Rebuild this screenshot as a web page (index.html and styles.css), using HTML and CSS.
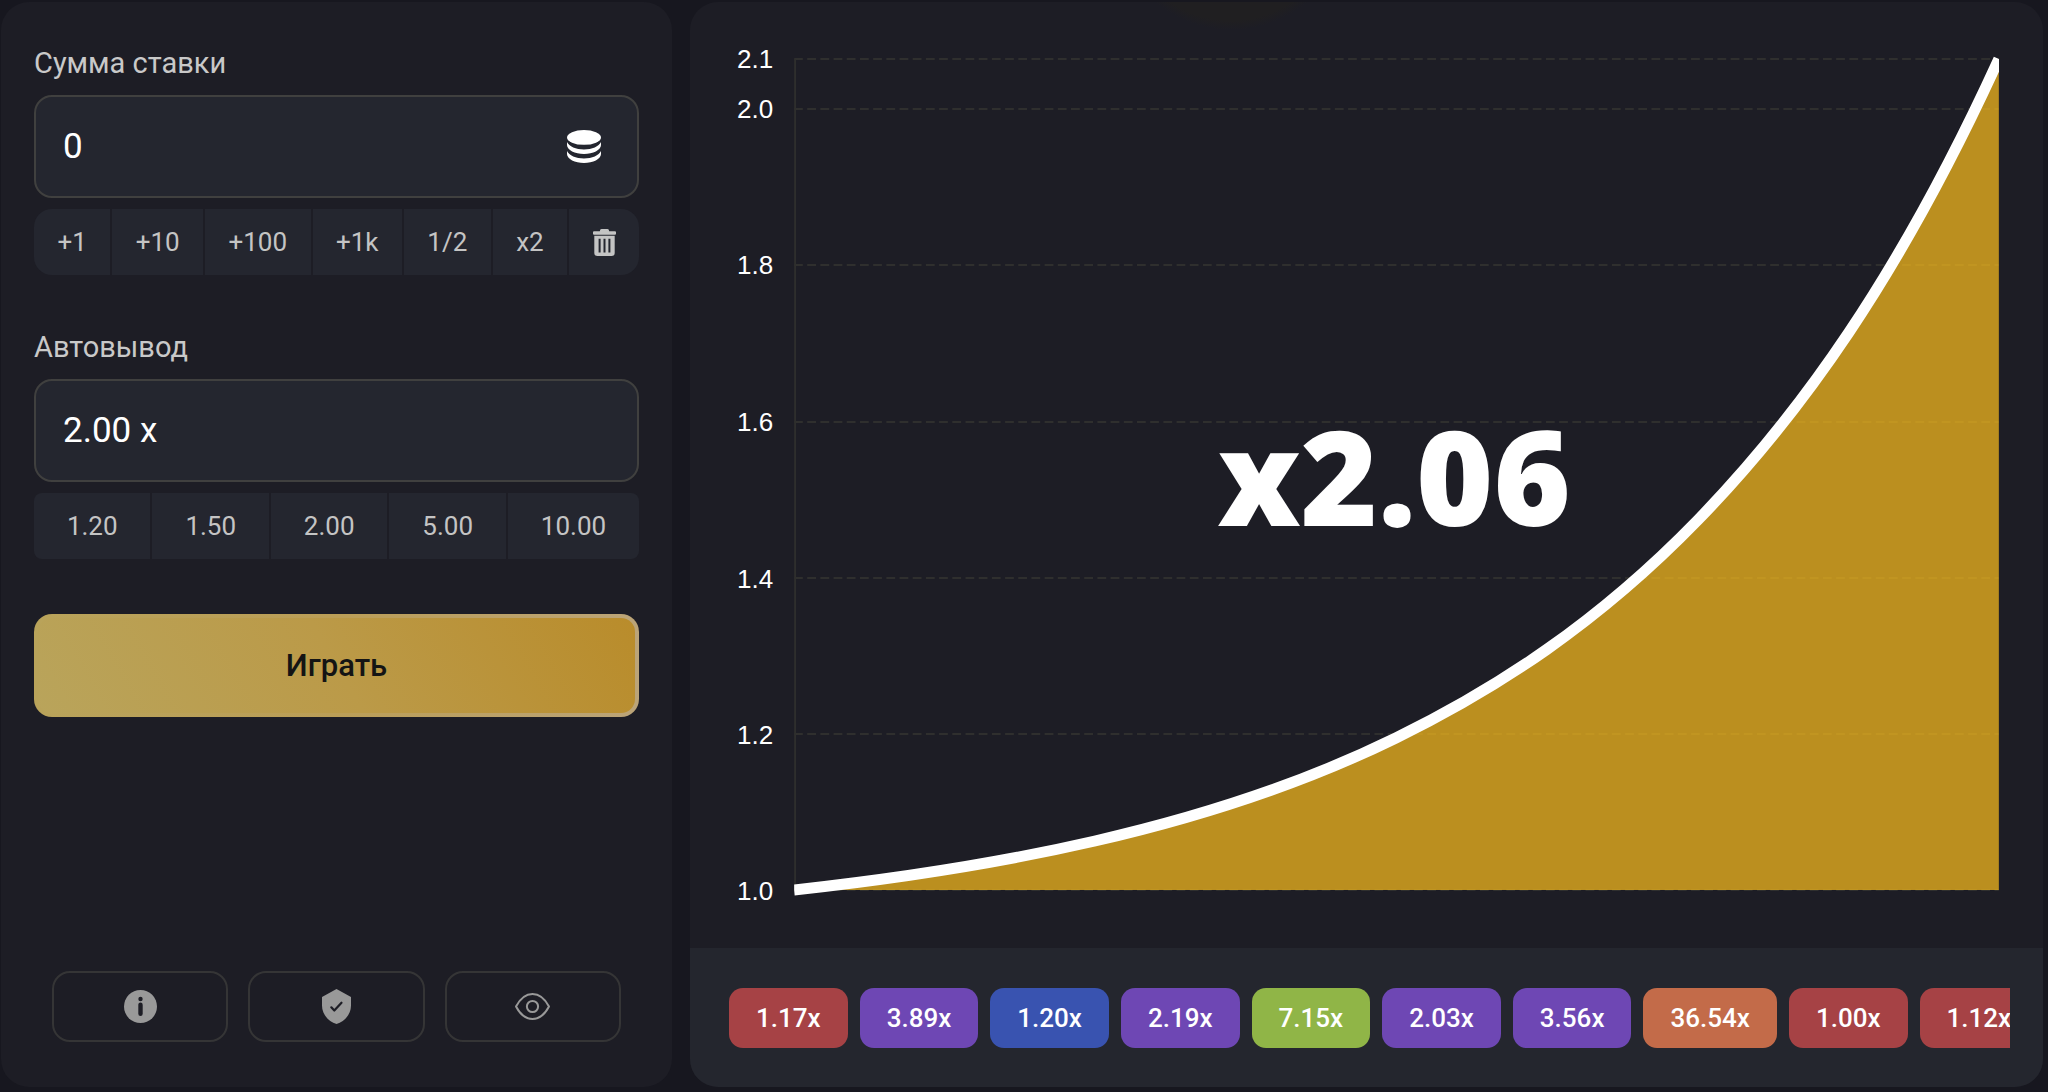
FILE: index.html
```html
<!DOCTYPE html>
<html lang="ru">
<head>
<meta charset="utf-8">
<meta name="viewport" content="width=device-width, initial-scale=1">
<title>Crash</title>
<link rel="stylesheet" href="styles.css">
</head>
<body>
<main class="game">
  <form class="panel controls">
    <div class="group">
      <label class="label" for="bet">Сумма ставки</label>
      <div class="field">
        <input class="field-input" id="bet" type="text" value="0">
        <svg class="icon-coins" viewBox="0 0 34 33" width="34" height="33" fill="#fff" aria-hidden="true">
          <ellipse cx="17" cy="7.4" rx="17" ry="7.4"/>
          <path d="M0 12v3c0 5 8 9 17 9s17-4 17-9v-3c-2 4.500-9 7.500-17 7.500S2 16.500 0 12z"/>
          <path d="M0 21v3c0 5 8 9 17 9s17-4 17-9v-3c-2 4.500-9 7.500-17 7.500S2 25.500 0 21z"/>
        </svg>
      </div>
      <div class="segments segments-round">
        <button class="segment" type="button">+1</button>
        <button class="segment" type="button">+10</button>
        <button class="segment" type="button">+100</button>
        <button class="segment" type="button">+1k</button>
        <button class="segment" type="button">1/2</button>
        <button class="segment" type="button">x2</button>
        <button class="segment" type="button" aria-label="Очистить">
          <svg viewBox="0 0 23 27" width="23" height="27" aria-hidden="true">
            <path fill="currentColor" fill-rule="evenodd" d="M8.500 0h6q1.500 0 1.700 2.200H22q1 0 1 1v1.600q0 .9-1 .9H1q-1 0-1-.9V3.200q0-1 1-1h5.800Q7 0 8.500 0zM1.300 6.800h20.400V24q0 3-3 3H4.300q-3 0-3-3zM5.600 9.800v13.800h2V9.800zm4.900 0v13.800h2V9.800zm4.900 0v13.800h2V9.800z"/>
          </svg>
        </button>
      </div>
    </div>

    <div class="group">
      <label class="label" for="auto">Автовывод</label>
      <div class="field">
        <input class="field-input" id="auto" type="text" value="2.00 x">
      </div>
      <div class="segments">
        <button class="segment" type="button">1.20</button>
        <button class="segment" type="button">1.50</button>
        <button class="segment" type="button">2.00</button>
        <button class="segment" type="button">5.00</button>
        <button class="segment" type="button">10.00</button>
      </div>
    </div>

    <button class="play" type="button">Играть</button>

    <div class="tools">
      <button class="tool" type="button" aria-label="Информация">
        <svg viewBox="0 0 33 33" width="33" height="33" aria-hidden="true">
          <circle cx="16.500" cy="16.500" r="16.500" fill="#999"/>
          <circle cx="16.500" cy="9" r="2.200" fill="#1d1d25"/>
          <path d="M16.500 14.800v9" stroke="#1d1d25" stroke-width="4.400" stroke-linecap="round"/>
        </svg>
      </button>
      <button class="tool" type="button" aria-label="Честная игра">
        <svg viewBox="0 0 29 35" width="29" height="35" fill="none" aria-hidden="true">
          <path d="M14.500 0 29 8v8.500C29 25 22.500 33 14.500 35 6.500 33 0 25 0 16.500V8z" fill="#999"/>
          <path d="m9.300 18.300 3 3.200 7.200-7.800" stroke="#1d1d25" stroke-width="2.200" stroke-linecap="round" stroke-linejoin="round"/>
        </svg>
      </button>
      <button class="tool" type="button" aria-label="Показать">
        <svg viewBox="0 0 35 27" width="35" height="27" fill="none" stroke="#999" stroke-width="2" stroke-linejoin="round" aria-hidden="true">
          <path d="M1 13.500C5 6 11 1 17.500 1S30 6 34 13.500C30 21 24 26 17.500 26S5 21 1 13.500z"/>
          <circle cx="17.500" cy="13.500" r="5.600"/>
        </svg>
      </button>
    </div>
  </form>

  <section class="panel board">
    <div class="chart">
      <ol class="axis">
        <li>2.1</li>
        <li>2.0</li>
        <li>1.8</li>
        <li>1.6</li>
        <li>1.4</li>
        <li>1.2</li>
        <li>1.0</li>
      </ol>
      <div class="plot">
        <svg class="plot-svg" viewBox="0 0 1205 832" preserveAspectRatio="none" aria-hidden="true">
          <g class="grid-lines">
            <path pathLength="548" d="M0 0H1205"/>
            <path pathLength="548" d="M0 50H1205"/>
            <path pathLength="548" d="M0 206H1205"/>
            <path pathLength="548" d="M0 363H1205"/>
            <path pathLength="548" d="M0 519H1205"/>
            <path pathLength="548" d="M0 675H1205"/>
            <path pathLength="548" d="M0 831H1205"/>
          </g>
          <path class="axis-line" d="M1 0V831"/>
          <path class="area" d="M0 831C100 820 201 805 301 782S502 728 602 679S803 565 904 461S1105 219 1205 0V831z"/>
          <path class="curve" d="M0 831C100 820 201 805 301 782S502 728 602 679S803 565 904 461S1105 219 1205 0"/>
        </svg>
        <output class="multiplier">x2.06</output>
      </div>
    </div>
    <div class="history">
      <ul class="history-list">
        <li class="chip red">1.17x</li>
        <li class="chip violet">3.89x</li>
        <li class="chip blue">1.20x</li>
        <li class="chip violet">2.19x</li>
        <li class="chip green">7.15x</li>
        <li class="chip violet">2.03x</li>
        <li class="chip violet">3.56x</li>
        <li class="chip orange">36.54x</li>
        <li class="chip red">1.00x</li>
        <li class="chip red">1.12x</li>
      </ul>
    </div>
  </section>
</main>
</body>
</html>
```
FILE: styles.css
```css
* {
  box-sizing: border-box;
}

body {
  margin: 0;
  background: #17171f;
  color: #fff;
  font-family: Roboto, "Liberation Sans", sans-serif;
}

button,
input {
  margin: 0;
  border: 0;
  font: inherit;
}

button {
  cursor: pointer;
}

ol,
ul {
  margin: 0;
  padding: 0;
  list-style: none;
}

svg {
  display: block;
  flex: none;
}

.game {
  display: grid;
  grid-template-columns: minmax(0, 671fr) minmax(0, 1353fr);
  gap: 18px;
  min-height: 100vh;
  padding: 2px 5px 5px 1px;
}

.panel {
  display: flex;
  flex-direction: column;
  border-radius: 28px;
  background-color: #1d1d25;
  overflow: hidden;
}

/* Bet controls */
.controls {
  gap: 55px;
  padding: 44px 33px 45px;
}

.group {
  display: flex;
  flex-direction: column;
}

.label {
  margin-bottom: 15px;
  color: #c9c9c9;
  font-size: 29px;
  line-height: 34px;
}

.field {
  display: flex;
  align-items: center;
  height: 103px;
  margin-bottom: 11px;
  padding: 0 36px 0 27px;
  border: 2px solid #40403f;
  border-radius: 18px;
  background: #24262f;
}

.field-input {
  flex: 1;
  min-width: 0;
  height: 100%;
  padding: 0;
  background: transparent;
  color: #fff;
  font-size: 35px;
  outline: 0;
}

.segments {
  display: flex;
  gap: 2px;
  height: 66px;
  border-radius: 8px;
  overflow: hidden;
}

.segments-round {
  border-radius: 18px;
}

.segment {
  display: flex;
  flex: 1 1 auto;
  align-items: center;
  justify-content: center;
  padding: 0 22px;
  background: #24262f;
  color: #c4c4c4;
  font-size: 26px;
}

.play {
  height: 103px;
  border: 4px solid transparent;
  border-radius: 18px;
  background:
    linear-gradient(60deg, #b9a45b, #bb9a48 50%, #b98c2b) padding-box,
    linear-gradient(90deg, #b9a35a, #bb9e57 50%, #bba478) border-box;
  color: #141414;
  font-size: 31px;
  font-weight: 500;
}

.tools {
  display: flex;
  gap: 20px;
  margin: auto 18px 0;
}

.tool {
  display: flex;
  flex: 1;
  align-items: center;
  justify-content: center;
  height: 71px;
  border: 2px solid #353536;
  border-radius: 18px;
  background: transparent;
}

/* Chart */
.board {
  background-image: radial-gradient(circle 118px at 40% -90px, #201f21 92%, transparent);
}

.chart {
  display: flex;
  flex: 1;
  gap: 21px;
  padding: 57px 44px 57px 47px;
}

.axis {
  display: grid;
  grid-template-rows: 50fr 156fr 157fr 156fr 156fr 156fr 0;
  font-family: "Liberation Sans", Arial, sans-serif;
  font-size: 26px;
  line-height: 0;
  text-align: right;
}

.axis li {
  height: 0;
}

.plot {
  display: grid;
  flex: 1;
  place-items: center;
  min-width: 0;
  clip-path: inset(-10px 0);
}

.plot-svg,
.multiplier {
  grid-area: 1 / 1;
}

.plot-svg {
  width: 100%;
  height: 100%;
  overflow: visible;
}

.grid-lines {
  fill: none;
  stroke: #2f2f2e;
  stroke-width: 2;
  stroke-dasharray: 4 2;
}

.axis-line {
  stroke: #2f2f2e;
  stroke-width: 2;
}

.area {
  fill: rgba(255, 193, 28, 0.7);
}

.curve {
  fill: none;
  stroke: #fff;
  stroke-width: 11;
  vector-effect: non-scaling-stroke;
}

.multiplier {
  padding-right: 5px;
  font-family: "Open Sans", sans-serif;
  font-size: 132px;
  font-weight: 800;
  line-height: 1;
}

/* Round history */
.history {
  padding: 40px 33px 39px 39px;
  background: #24262e;
}

.history-list {
  display: flex;
  gap: 12px;
  overflow: hidden;
}

.chip {
  flex: none;
  padding: 0 27px;
  border-radius: 14px;
  font-size: 26px;
  font-weight: 500;
  line-height: 60px;
}

.red {
  background: #a64245;
}

.violet {
  background: #6e47b4;
}

.blue {
  background: #3953b0;
}

.green {
  background: #90b547;
}

.orange {
  background: #c36b49;
}
```
